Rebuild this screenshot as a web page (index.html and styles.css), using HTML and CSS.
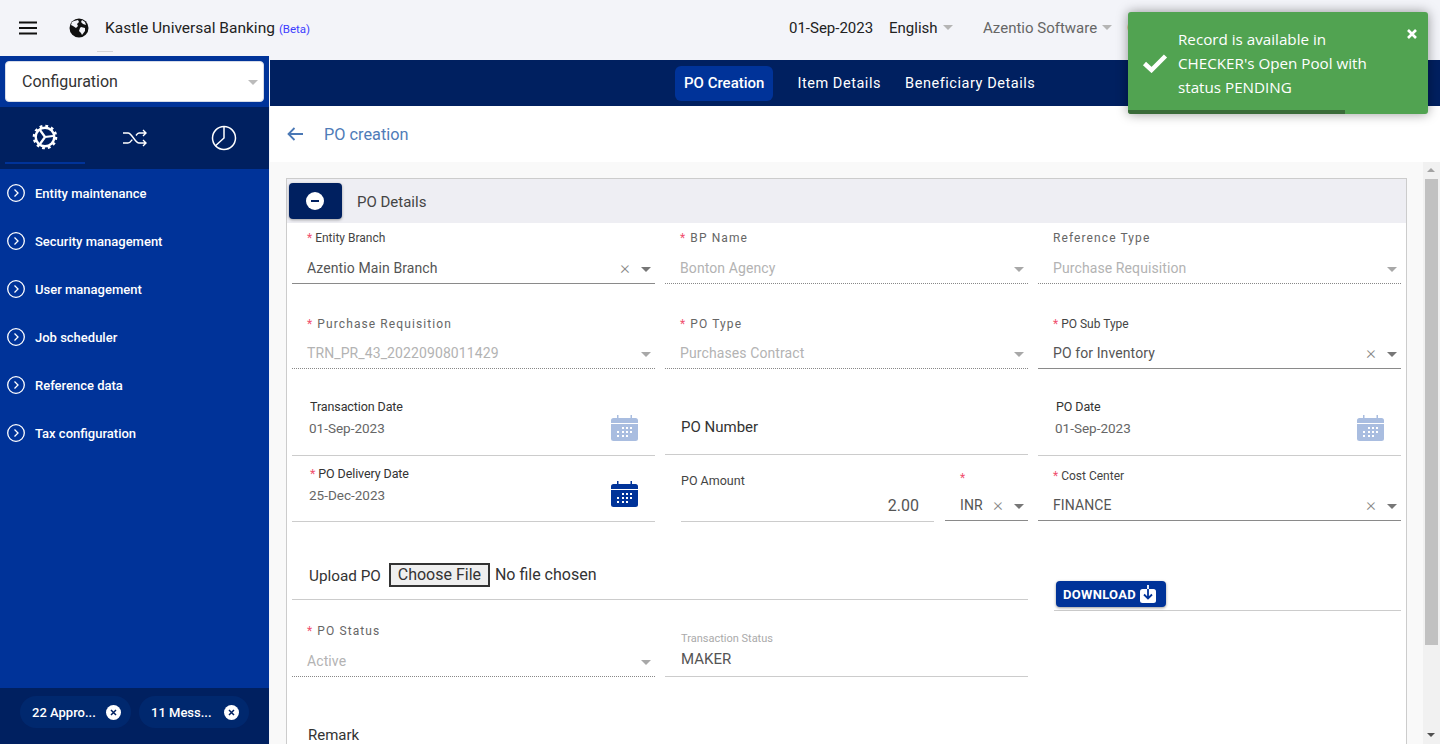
FILE: index.html
```html
<!DOCTYPE html>
<html lang="en">
<head>
<meta charset="UTF-8" />
<meta name="viewport" content="width=device-width, initial-scale=1" />
<title>Kastle Universal Banking</title>
<link rel="stylesheet" href="styles.css">
</head>
<body>

<header class="topbar">
  <svg class="burger" width="20" height="14" viewBox="0 0 20 14"><path d="M1 1.5h18M1 7h18M1 12.5h18" stroke="#111" stroke-width="2"/></svg>
  <svg class="globe" width="20" height="20" viewBox="0 0 20 20"><circle cx="10" cy="10" r="9.5" fill="#111"/><path d="M5 3l4-1 1 2-2 2 1 2-2 2-3-2-2-1 1-3zM12 9l4 1 0 3-3 4-1-2-2-2 1-3zM13 2l3 2 1 3-3-1-2-2z" fill="#f3f4f9"/></svg>
  <span class="brand">Kastle Universal Banking</span>
  <span class="beta">(Beta)</span>
  <span class="grip"></span>
  <div class="topbar-right">
    <span class="top-date">01-Sep-2023</span>
    <span class="top-menu lang">English<i class="caret"></i></span>
    <span class="top-menu org">Azentio Software<i class="caret"></i></span>
    <span class="top-menu user">Circle</span>
  </div>
</header>

<div class="shell">
  <aside class="sidebar">
    <div class="module-select"><span>Configuration</span><i class="caret"></i></div>
    <div class="side-tabs">
      <div class="side-tab active">
        <svg width="26" height="26" viewBox="0 0 26 26" fill="none" stroke="#fff"><circle cx="13" cy="13" r="9.3" stroke-width="2.4"/><circle cx="13" cy="13" r="11" stroke-width="2.6" stroke-dasharray="2.8 2.96"/><path d="M13 13l8-1M13 13l-5-7M13 13l-5 7" stroke-width="2.2"/></svg>
      </div>
      <div class="side-tab">
        <svg width="26" height="22" viewBox="0 0 26 22" fill="none" stroke="#fff" stroke-width="1.4"><path d="M1 6h5c4 0 7 10 11 10h7M1 16h5c1.700 0 3-1.500 4.300-3.300M14 8.500C15 7 16 6 17 6h7M21 3l3 3-3 3M21 13l3 3-3 3"/></svg>
      </div>
      <div class="side-tab pie">
        <svg width="26" height="26" viewBox="0 0 26 26" fill="none" stroke="#fff" stroke-width="1.500"><circle cx="13" cy="13" r="11.500"/><path d="M13 1.500V13L4.500 20.700"/></svg>
      </div>
    </div>
    <nav class="side-menu">
      <a class="side-item"><svg width="18" height="18" viewBox="0 0 18 18" fill="none" stroke="#fff" stroke-width="1.300"><circle cx="9" cy="9" r="8.300"/><path d="M7.500 5.500L11 9l-3.500 3.500"/></svg>Entity maintenance</a>
      <a class="side-item"><svg width="18" height="18" viewBox="0 0 18 18" fill="none" stroke="#fff" stroke-width="1.300"><circle cx="9" cy="9" r="8.300"/><path d="M7.500 5.500L11 9l-3.500 3.500"/></svg>Security management</a>
      <a class="side-item"><svg width="18" height="18" viewBox="0 0 18 18" fill="none" stroke="#fff" stroke-width="1.300"><circle cx="9" cy="9" r="8.300"/><path d="M7.500 5.500L11 9l-3.500 3.500"/></svg>User management</a>
      <a class="side-item"><svg width="18" height="18" viewBox="0 0 18 18" fill="none" stroke="#fff" stroke-width="1.300"><circle cx="9" cy="9" r="8.300"/><path d="M7.500 5.500L11 9l-3.500 3.500"/></svg>Job scheduler</a>
      <a class="side-item"><svg width="18" height="18" viewBox="0 0 18 18" fill="none" stroke="#fff" stroke-width="1.300"><circle cx="9" cy="9" r="8.300"/><path d="M7.500 5.500L11 9l-3.500 3.500"/></svg>Reference data</a>
      <a class="side-item"><svg width="18" height="18" viewBox="0 0 18 18" fill="none" stroke="#fff" stroke-width="1.300"><circle cx="9" cy="9" r="8.300"/><path d="M7.500 5.500L11 9l-3.500 3.500"/></svg>Tax configuration</a>
    </nav>
    <div class="side-foot">
      <span class="pill pill-a">22 Appro...<svg width="15" height="15" viewBox="0 0 15 15"><circle cx="7.500" cy="7.500" r="7.500" fill="#fff"/><path d="M5 5l5 5M10 5l-5 5" stroke="#002060" stroke-width="1.500"/></svg></span>
      <span class="pill pill-b">11 Mess...<svg width="15" height="15" viewBox="0 0 15 15"><circle cx="7.500" cy="7.500" r="7.500" fill="#fff"/><path d="M5 5l5 5M10 5l-5 5" stroke="#002060" stroke-width="1.500"/></svg></span>
    </div>
  </aside>

  <main class="main">
    <div class="tabs">
      <span class="tab active">PO Creation</span>
      <span class="tab">Item Details</span>
      <span class="tab">Beneficiary Details</span>
    </div>
    <div class="crumb">
      <svg width="16" height="14" viewBox="0 0 16 14" fill="none" stroke="#4a78b5" stroke-width="1.800"><path d="M16 7H1.500M7.500 1L1.500 7l6 6"/></svg>
      <span>PO creation</span>
    </div>

    <div class="content">
      <div class="scroll-area">
        <section class="panel">
          <div class="panel-head">
            <button class="collapse"><svg width="18" height="18" viewBox="0 0 18 18"><circle cx="9" cy="9" r="9" fill="#fff"/><path d="M5 9h8" stroke="#002060" stroke-width="2"/></svg></button>
            <span>PO Details</span>
          </div>

          <div class="form-grid">
            <div class="field sel r1">
              <label class="lb"><b>*</b> Entity Branch</label>
              <div class="val">Azentio Main Branch<i class="clear">×</i><i class="caret"></i></div>
            </div>
            <div class="field sel off r1">
              <label class="lb wide"><b>*</b> BP Name</label>
              <div class="val">Bonton Agency<i class="caret"></i></div>
            </div>
            <div class="field sel off r1">
              <label class="lb wide">Reference Type</label>
              <div class="val">Purchase Requisition<i class="caret"></i></div>
            </div>

            <div class="field sel off r2">
              <label class="lb wide"><b>*</b> Purchase Requisition</label>
              <div class="val">TRN_PR_43_20220908011429<i class="caret"></i></div>
            </div>
            <div class="field sel off r2">
              <label class="lb wide"><b>*</b> PO Type</label>
              <div class="val">Purchases Contract<i class="caret"></i></div>
            </div>
            <div class="field sel r2">
              <label class="lb"><b>*</b> PO Sub Type</label>
              <div class="val">PO for Inventory<i class="clear">×</i><i class="caret"></i></div>
            </div>

            <div class="field date r3">
              <label>Transaction Date</label>
              <div class="date-val">01-Sep-2023</div>
              <svg class="cal" width="27" height="27" viewBox="0 0 27 27"><use href="#cal"/></svg>
            </div>
            <div class="field plain r3"><label>PO Number</label></div>
            <div class="field date r3">
              <label>PO Date</label>
              <div class="date-val">01-Sep-2023</div>
              <svg class="cal" width="27" height="27" viewBox="0 0 27 27"><use href="#cal"/></svg>
            </div>

            <div class="field date r4">
              <label><b>*</b> PO Delivery Date</label>
              <div class="date-val">25-Dec-2023</div>
              <svg class="cal on" width="27" height="27" viewBox="0 0 27 27"><use href="#cal"/></svg>
            </div>
            <div class="amount-wrap r4">
              <div class="amount">
                <label>PO Amount</label>
                <div class="amount-val">2.00</div>
              </div>
              <div class="field sel curr">
                <label class="lb"><b>*</b></label>
                <div class="val">INR<i class="clear">×</i><i class="caret"></i></div>
              </div>
            </div>
            <div class="field sel r4 cost">
              <label class="lb"><b>*</b> Cost Center</label>
              <div class="val">FINANCE<i class="clear">×</i><i class="caret"></i></div>
            </div>

            <div class="upload r5">
              <span>Upload PO</span>
              <input type="file" />
            </div>
            <div class="download-cell r5">
              <button class="download">DOWNLOAD<svg width="16" height="18" viewBox="0 0 16 18"><rect x="0" y="4" width="16" height="14" rx="2.500" fill="#fff"/><path d="M8 0v13M4 9.500L8 13.500l4-4" fill="none" stroke="#003399" stroke-width="1.800"/><path d="M8 0v4" stroke="#fff" stroke-width="1.800"/></svg></button>
            </div>

            <div class="field sel off r6">
              <label class="lb wide"><b>*</b> PO Status</label>
              <div class="val">Active<i class="caret"></i></div>
            </div>
            <div class="field status r6">
              <label>Transaction Status</label>
              <div>MAKER</div>
            </div>
          </div>

          <div class="remark">Remark</div>
        </section>
      </div>
      <div class="scrollbar"><i class="up"></i><div class="thumb"></div><i class="down"></i></div>
    </div>
  </main>
</div>

<div class="toast">
  <svg class="toast-check" width="26" height="20" viewBox="0 0 26 20"><path d="M2.500 10.500l7 6.500L23.500 3" fill="none" stroke="#fff" stroke-width="4.500"/></svg>
  <div class="toast-msg">Record is available in CHECKER's Open Pool with status PENDING</div>
  <svg class="toast-close" width="10" height="10" viewBox="0 0 10 10"><path d="M1 1l8 8M9 1L1 9" stroke="#fff" stroke-width="2.600"/></svg>
  <div class="toast-bar"></div>
</div>

<svg class="defs" width="0" height="0">
  <symbol id="cal" viewBox="0 0 27 27">
    <path d="M6 1h1.500v3H19.500V1H21v3h3.500A2.500 2.500 0 0 1 27 6.500V9H0V6.500A2.500 2.500 0 0 1 2.500 4H6z" fill="currentColor"/>
    <path fill-rule="evenodd" d="M0 10h27v14.500a2.500 2.500 0 0 1-2.500 2.500h-22A2.500 2.500 0 0 1 0 24.500z" fill="currentColor"/>
    <g fill="#fff">
      <rect x="11" y="13" width="2" height="2"/><rect x="15" y="13" width="2" height="2"/><rect x="19" y="13" width="2" height="2"/>
      <rect x="6" y="17" width="2" height="2"/><rect x="11" y="17" width="2" height="2"/><rect x="15" y="17" width="2" height="2"/><rect x="19" y="17" width="2" height="2"/>
      <rect x="6" y="21" width="2" height="2"/><rect x="11" y="21" width="2" height="2"/><rect x="15" y="21" width="2" height="2"/>
    </g>
  </symbol>
</svg>

</body>
</html>
```
FILE: styles.css
```css
* {
  box-sizing: border-box;
}
html, body {
  margin: 0;
  height: 744px;
  overflow: hidden;
}
body {
  font-family: Roboto, "Liberation Sans", sans-serif;
  background: #f3f4f9;
  color: #333;
  position: relative;
}
i {
  font-style: normal;
}
.caret {
  display: inline-block;
  width: 0;
  height: 0;
  border-left: 5.5px solid transparent;
  border-right: 5.5px solid transparent;
  border-top: 5.5px solid #777;
}

/* top bar */
.topbar {
  height: 56px;
  display: flex;
  align-items: center;
  position: relative;
  padding-left: 18px;
  color: #222;
}
.burger {
  margin-right: 31px;
}
.globe {
  margin-right: 16px;
}
.brand {
  font-size: 15.500px;
  margin-right: 4px;
  margin-top: -1px;
}
.beta {
  font-size: 11.500px;
  color: #3d3dff;
  margin-top: 1px;
}
.grip {
  position: absolute;
  left: 97px;
  top: 51px;
  width: 16px;
  height: 1px;
  background: #d4d4d8;
}
.topbar-right {
  margin-left: auto;
  display: flex;
  align-items: center;
  font-size: 15px;
  width: 651px;
  height: 56px;
}
.top-date {
  width: 100px;
  font-size: 15px;
}
.top-menu .caret {
  margin-left: 5px;
  vertical-align: 3px;
  border-top-color: #b5b5b5;
}
.lang {
  width: 94px;
}
.org {
  width: 144px;
  color: #666;
}
.user {
  color: #666;
}

.shell {
  display: flex;
  height: 688px;
}

/* sidebar */
.sidebar {
  width: 269px;
  background: #003399;
  display: flex;
  flex-direction: column;
}
.module-select {
  margin: 5px;
  height: 41px;
  background: #fff;
  border-radius: 4px;
  border: 1px solid #d6dbe8;
  display: flex;
  align-items: center;
  justify-content: space-between;
  padding: 0 5px 0 16px;
  font-size: 16px;
  color: #333;
}
.module-select .caret {
  border-top-color: #bbb;
  margin-top: 2px;
}
.side-tabs {
  height: 62px;
  background: #002060;
  display: flex;
  padding-left: 5px;
}
.side-tab {
  flex: none;
  width: 80px;
  height: 57px;
  margin-right: 10px;
  display: flex;
  align-items: center;
  justify-content: center;
  padding-top: 5px;
}
.side-tab.active {
  border-bottom: 2px solid #003399;
}
.side-tab.pie svg {
  margin-right: 2px;
}
.side-menu {
  flex: 1;
}
.side-item {
  height: 48px;
  display: flex;
  align-items: center;
  padding-left: 7px;
  gap: 10px;
  color: #fff;
  font-size: 13px;
  font-weight: 500;
}
.side-foot {
  height: 56px;
  background: #002060;
  display: flex;
  align-items: center;
  padding: 0 0 8px 20px;
  gap: 8px;
}
.pill {
  height: 32px;
  border-radius: 16px;
  background: #00286e;
  color: #fff;
  font-size: 13px;
  font-weight: 500;
  display: flex;
  align-items: center;
  justify-content: space-between;
  padding: 0 10px 0 12px;
}
.pill-a {
  width: 111px;
}
.pill-b {
  width: 110px;
}

/* main column */
.main {
  flex: 1;
  margin-left: 1px;
  padding-top: 4px;
  display: flex;
  flex-direction: column;
  min-width: 0;
}
.tabs {
  height: 46px;
  background: #002060;
  display: flex;
  align-items: center;
  padding-left: 405px;
  gap: 6px;
  color: #fff;
  font-size: 14.500px;
  letter-spacing: 0.55px;
}
.tab {
  padding: 0 9px;
  height: 35px;
  line-height: 36px;
  border-radius: 6px;
}
.tab.active {
  background: #003399;
  font-size: 15px;
  font-weight: 500;
  letter-spacing: 0;
  line-height: 34px;
  margin-right: 9px;
}
.crumb {
  height: 56px;
  background: #fff;
  display: flex;
  align-items: center;
  padding-left: 17px;
  gap: 21px;
  color: #4f7cb8;
  font-size: 16.300px;
}
.content {
  flex: 1;
  display: flex;
  background: #f9f9f9;
  min-height: 0;
}
.scroll-area {
  flex: 1;
  overflow: hidden;
  padding: 16px 17px 0 16px;
}
.scrollbar {
  width: 17px;
  margin-left: -1px;
  background: #f1f1f1;
  position: relative;
  padding: 17px 2px 0;
}
.scrollbar .up {
  position: absolute;
  top: 6px;
  left: 4px;
  border-left: 4px solid transparent;
  border-right: 4px solid transparent;
  border-bottom: 4px solid #a3a3a3;
}
.scrollbar .down {
  position: absolute;
  bottom: 7px;
  left: 4px;
  border-left: 4px solid transparent;
  border-right: 4px solid transparent;
  border-top: 4px solid #505050;
}
.thumb {
  height: 466px;
  background: #c1c1c1;
}

/* panel */
.panel {
  background: #fff;
  border: 1px solid #ccc;
  height: 700px;
}
.panel-head {
  height: 44px;
  background: #eeeef3;
  display: flex;
  align-items: center;
  padding-left: 2px;
  font-size: 15px;
  color: #444;
}
.panel-head span {
  margin-top: 2px;
}
.collapse {
  width: 53px;
  height: 36px;
  margin-right: 15px;
  padding: 0 2px 0 0;
  border: none;
  border-radius: 4px;
  background: #002060;
  box-shadow: 0 1px 3px rgba(0,0,0,0.35);
  display: flex;
  align-items: center;
  justify-content: center;
}
.form-grid {
  display: grid;
  grid-template-columns: 363px 363px 363px;
  grid-template-rows: 61px 85px 86px 66px 79px 77px;
  column-gap: 10px;
  padding-left: 5px;
  align-items: end;
}
.field {
  position: relative;
}

/* select fields */
.sel {
  color: #555;
}
.lb {
  display: block;
  font-size: 12px;
  line-height: 14px;
  padding-left: 15px;
  color: #444;
  margin-bottom: 9px;
}
.r2 .lb {
  margin-bottom: 8px;
}
.lb b {
  color: #f0506e;
  font-weight: 400;
}
.lb.wide {
  letter-spacing: 1.100px;
  color: #666;
}
.val {
  height: 30px;
  display: flex;
  align-items: center;
  padding: 0 4px 1px 15px;
  border-bottom: 1px solid #8a8a8a;
  font-size: 14px;
  color: #555;
  letter-spacing: 0.1px;
}
.val .clear {
  margin-left: auto;
  margin-right: 11px;
  margin-bottom: 2px;
  font-size: 19px;
  font-weight: 300;
  color: #888;
}
.val .caret {
  margin-top: 2px;
}
.val > .caret:first-of-type {
  margin-left: auto;
}
.off .val {
  border-bottom: 1px dotted #888;
  color: #b3b3b3;
}
.off .val .caret {
  border-top-color: #a8a8a8;
}

/* date fields */
.date {
  height: 70px;
  border-bottom: 1px solid #ccc;
  padding: 0 0 0 18px;
  margin-bottom: -1px;
}
.r4.date {
  height: 66px;
}
.date label {
  display: block;
  font-size: 12.500px;
  color: #333;
  line-height: 15px;
  padding-top: 13px;
  letter-spacing: -0.1px;
}
.r4.date label {
  padding-top: 10px;
}
.date label b, .amount b {
  color: #f0506e;
  font-weight: 400;
}
.date-val {
  font-size: 13.500px;
  color: #666;
  margin: 6px 0 0 -1px;
}
.cal {
  position: absolute;
  right: 17px;
  top: 28px;
  color: #a9bde0;
}
.r4 .cal {
  top: 24px;
}
.cal.on {
  color: #003399;
}
.plain {
  height: 70px;
  border-bottom: 1px solid #ccc;
  padding: 33px 0 0 16px;
  font-size: 15px;
  color: #333;
}

/* amount + currency */
.amount-wrap {
  display: flex;
  padding-left: 16px;
  gap: 11px;
  height: 66px;
}
.amount {
  flex: 1;
  border-bottom: 1px solid #ccc;
  font-size: 12.500px;
  color: #444;
  padding-top: 18px;
  height: 67px;
}
.amount label {
  display: block;
  line-height: 15px;
}
.amount-val {
  text-align: right;
  font-size: 16px;
  color: #555;
  padding: 8px 15px 0 0;
}
.curr {
  width: 83px;
  align-self: end;
}
.curr .lb {
  margin-bottom: 6px;
}
.cost .lb {
  margin-bottom: 8px;
}

/* upload row */
.upload {
  grid-column: span 2;
  height: 49px;
  border-bottom: 1px solid #ccc;
  display: flex;
  align-items: flex-start;
  padding-left: 17px;
  font-size: 15.300px;
  color: #333;
}
.upload span {
  margin: 16px 8px 0 0;
}
.upload input {
  font-family: Roboto, sans-serif;
  font-size: 16px;
  color: #333;
  margin-top: 12px;
}
.upload input::file-selector-button {
  font: inherit;
  height: 24px;
  width: 101px;
  padding: 0 0 2px;
  margin-right: 5px;
  border: 2px solid #333;
  background: #efefef;
  color: #333;
}
.download-cell {
  margin-left: 16px;
  height: 29px;
  border-bottom: 1px solid #ccc;
  margin-bottom: -11px;
}
.download {
  width: 110px;
  height: 26px;
  margin: -1px 0 0 2px;
  border: none;
  border-radius: 4px;
  background: #003399;
  color: #fff;
  font-family: Roboto, sans-serif;
  font-size: 13px;
  font-weight: 700;
  letter-spacing: 0.3px;
  display: flex;
  align-items: center;
  gap: 4px;
  padding: 0 0 0 7px;
  box-shadow: 0 1px 3px rgba(0,0,0,0.4);
}
.status {
  height: 48px;
  border-bottom: 1px solid #ccc;
  padding-left: 16px;
  font-size: 15px;
  color: #555;
}
.status label {
  display: block;
  font-size: 11px;
  color: #aaa;
  line-height: 13px;
  padding-top: 3px;
  margin-bottom: 5px;
}
.remark {
  padding: 49px 0 0 21px;
  font-size: 15px;
  color: #333;
}

/* toast */
.toast {
  position: absolute;
  left: 1128px;
  top: 12px;
  width: 300px;
  height: 102px;
  background: #51a351;
  border-radius: 3px;
  box-shadow: 0 0 12px rgba(0,0,0,0.4);
  color: #fff;
  overflow: hidden;
}
.toast-check {
  position: absolute;
  left: 14px;
  top: 41px;
}
.toast-msg {
  position: absolute;
  left: 50px;
  top: 15px;
  width: 200px;
  font-family: "Open Sans", sans-serif;
  font-size: 15.200px;
  line-height: 24px;
}
.toast-close {
  position: absolute;
  left: 279px;
  top: 17px;
}
.toast-bar {
  position: absolute;
  left: 0;
  bottom: 0;
  width: 217px;
  height: 4px;
  background: #3a6b39;
}
.defs {
  position: absolute;
}
```
